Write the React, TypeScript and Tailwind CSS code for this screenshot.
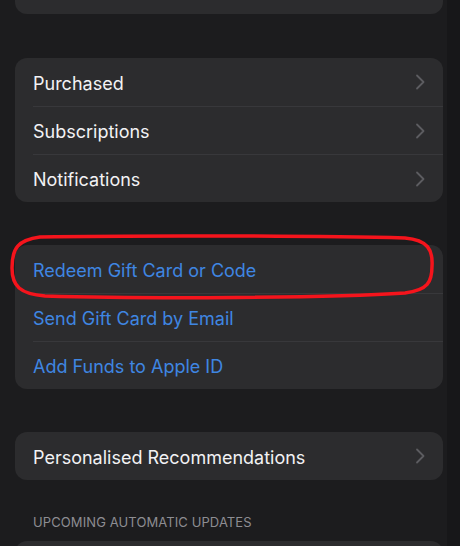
import React from "react";

const Chevron = () => (
  <svg width="10" height="16" viewBox="0 0 10 16" className="shrink-0">
    <polyline points="2,1.5 8.5,8 2,14.5" fill="none" stroke="#5c5c60" strokeWidth="1.8" strokeLinecap="round" strokeLinejoin="round" />
  </svg>
);

function Row({ label, blue, chevron, first }: { label: string; blue?: boolean; chevron?: boolean; first?: boolean }) {
  return (
    <div className="flex h-[48px] items-stretch pl-[18px]">
      <div className={`flex flex-1 items-center pr-[18px] ${first ? "" : "border-t border-[#38383b]"}`}>
        <span className={`flex-1 pt-[3px] text-[18px] leading-[22px] ${blue ? "text-[#3f86e2]" : "text-[#f2f2f4]"}`}>{label}</span>
        {chevron && <Chevron />}
      </div>
    </div>
  );
}

function Card({ children, className = "" }: { children?: React.ReactNode; className?: string }) {
  return <div className={`rounded-[12px] bg-[#2c2c2e] overflow-hidden ${className}`}>{children}</div>;
}

export default function App() {
  return (
    <div className="flex h-[546px] w-[460px] overflow-hidden bg-[#1c1c1e]" style={{ fontFamily: "Inter, 'Noto Sans', sans-serif" }}>
      <div className="relative flex w-[447px] flex-col pl-[15px] pr-[4px]">
        <Card className="-mt-[34px] h-[48px] shrink-0" />
        <Card className="mt-[44px] shrink-0">
          <Row label="Purchased" chevron first />
          <Row label="Subscriptions" chevron />
          <Row label="Notifications" chevron />
        </Card>
        <Card className="mt-[43px] shrink-0">
          <Row label="Redeem Gift Card or Code" blue first />
          <Row label="Send Gift Card by Email" blue />
          <Row label="Add Funds to Apple ID" blue />
        </Card>
        <Card className="mt-[43px] shrink-0">
          <Row label="Personalised Recommendations" chevron first />
        </Card>
        <div className="mt-[34px] pl-[18px] text-[13px] leading-[16px] tracking-[0.1px] text-[#8d8d92]">UPCOMING AUTOMATIC UPDATES</div>
        <Card className="mt-[11px] h-[48px] shrink-0" />
        <svg className="pointer-events-none absolute left-0 top-0" width="447" height="546">
          <path
            d="M40 237 C 150 235, 330 236, 405 238 C 428 240, 433 250, 432 266 C 432 282, 428 290, 405 293 C 330 298, 150 299, 45 296 C 20 294, 12 286, 12 268 C 12 248, 18 240, 40 237 Z"
            fill="none"
            stroke="#f5141c"
            strokeWidth="3.5"
          />
        </svg>
      </div>
      <div className="flex-1 bg-[#171719]" />
    </div>
  );
}
